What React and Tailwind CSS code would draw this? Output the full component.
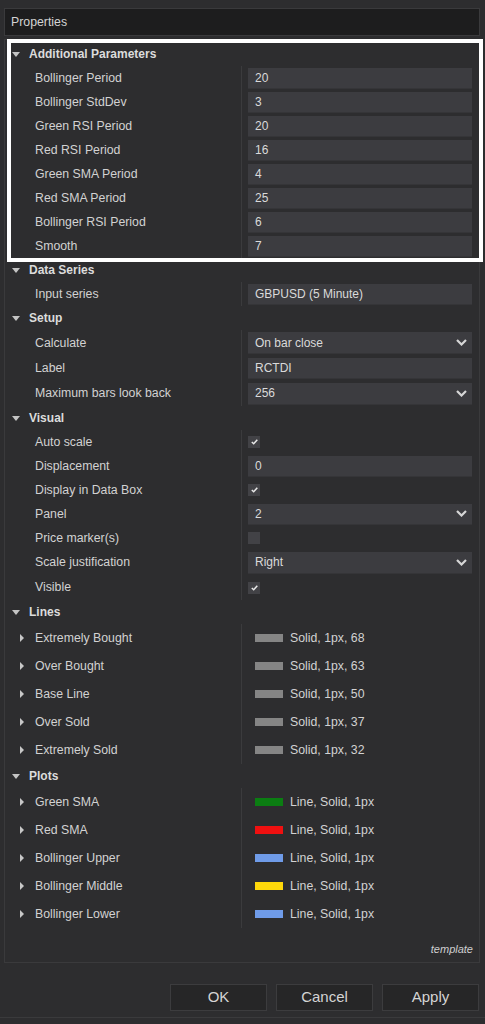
import React from 'react';

const font = { fontFamily: '"Liberation Sans", Arial, sans-serif' };

const sections = [
  {
    title: 'Additional Parameters',
    rows: [
      { label: 'Bollinger Period', type: 'text', value: '20' },
      { label: 'Bollinger StdDev', type: 'text', value: '3' },
      { label: 'Green RSI Period', type: 'text', value: '20' },
      { label: 'Red RSI Period', type: 'text', value: '16' },
      { label: 'Green SMA Period', type: 'text', value: '4' },
      { label: 'Red SMA Period', type: 'text', value: '25' },
      { label: 'Bollinger RSI Period', type: 'text', value: '6' },
      { label: 'Smooth', type: 'text', value: '7' },
    ],
  },
  {
    title: 'Data Series',
    rows: [{ label: 'Input series', type: 'text', value: 'GBPUSD (5 Minute)' }],
  },
  {
    title: 'Setup',
    rows: [
      { label: 'Calculate', type: 'combo', value: 'On bar close', h: 'h-[26px]' },
      { label: 'Label', type: 'text', value: 'RCTDI', h: 'h-[25px]' },
      { label: 'Maximum bars look back', type: 'combo', value: '256', h: 'h-[25px]' },
    ],
  },
  {
    title: 'Visual',
    rows: [
      { label: 'Auto scale', type: 'check', checked: true },
      { label: 'Displacement', type: 'text', value: '0' },
      { label: 'Display in Data Box', type: 'check', checked: true },
      { label: 'Panel', type: 'combo', value: '2' },
      { label: 'Price marker(s)', type: 'check', checked: false },
      { label: 'Scale justification', type: 'combo', value: 'Right', h: 'h-[25px]' },
      { label: 'Visible', type: 'check', checked: true, h: 'h-[25px]' },
    ],
  },
  {
    title: 'Lines',
    rows: [
      { label: 'Extremely Bought', type: 'swatch', color: '#858585', value: 'Solid, 1px, 68' },
      { label: 'Over Bought', type: 'swatch', color: '#858585', value: 'Solid, 1px, 63' },
      { label: 'Base Line', type: 'swatch', color: '#858585', value: 'Solid, 1px, 50' },
      { label: 'Over Sold', type: 'swatch', color: '#858585', value: 'Solid, 1px, 37' },
      { label: 'Extremely Sold', type: 'swatch', color: '#858585', value: 'Solid, 1px, 32' },
    ],
  },
  {
    title: 'Plots',
    rows: [
      { label: 'Green SMA', type: 'swatch', color: '#0b7d12', value: 'Line, Solid, 1px' },
      { label: 'Red SMA', type: 'swatch', color: '#f01010', value: 'Line, Solid, 1px' },
      { label: 'Bollinger Upper', type: 'swatch', color: '#6f9be8', value: 'Line, Solid, 1px' },
      { label: 'Bollinger Middle', type: 'swatch', color: '#ffd80a', value: 'Line, Solid, 1px' },
      { label: 'Bollinger Lower', type: 'swatch', color: '#6f9be8', value: 'Line, Solid, 1px' },
    ],
  },
];

const DownTri = () => (
  <svg width="8" height="5" viewBox="0 0 8 5" className="shrink-0">
    <path d="M0 0 L8 0 L4 5 Z" fill="#c4c4c4" />
  </svg>
);

const RightTri = () => (
  <svg width="4" height="8" viewBox="0 0 4 8" className="shrink-0">
    <path d="M0 0 L4 4 L0 8 Z" fill="#c8c8c8" />
  </svg>
);

const Chevron = () => (
  <svg width="11" height="7" viewBox="0 0 11 7" className="shrink-0">
    <path d="M1 1 L5.5 5.5 L10 1" fill="none" stroke="#d6d6d6" strokeWidth="2.2" />
  </svg>
);

const Check = () => (
  <svg width="7" height="6" viewBox="0 0 7 6">
    <path d="M0.8 3 L2.7 4.8 L6.3 0.8" fill="none" stroke="#e8e8e8" strokeWidth="1.5" />
  </svg>
);

const Value = ({ row }) => {
  if (row.type === 'check') {
    return (
      <div className="w-[12px] h-[12px] bg-[#424246] flex items-center justify-center">
        {row.checked && <Check />}
      </div>
    );
  }
  if (row.type === 'swatch') {
    return (
      <div className="flex items-center pl-[7px]">
        <div className="w-[28px] h-[8px]" style={{ backgroundColor: row.color }}></div>
        <span className="ml-[7px] text-[12.3px] text-[#d2d2d2]">{row.value}</span>
      </div>
    );
  }
  return (
    <div className={`w-[224px] ${row.type === 'combo' && row.h ? 'h-[22px]' : 'h-[21px]'} bg-[#3c3c40] border-b border-[#353538] flex items-center justify-between pl-[7px] pr-[5px]`}>
      <span className="text-[12px] text-[#dadada]">{row.value}</span>
      {row.type === 'combo' && <Chevron />}
    </div>
  );
};

const Row = ({ row }) => {
  const expandable = row.type === 'swatch';
  const h = expandable ? 'h-[28px]' : row.h || 'h-[24px]';
  return (
    <div className={`flex ${h}`}>
      <div className={`w-[236px] flex items-center ${expandable ? 'pl-[15px]' : 'pl-[30px]'}`}>
        {expandable && <RightTri />}
        <span className={`${expandable ? 'ml-[11px]' : ''} text-[12.3px] text-[#d2d2d2] whitespace-nowrap`}>{row.label}</span>
      </div>
      <div className="flex-1 border-l border-[#3b3b3d] pl-[6px] flex items-center">
        <Value row={row} />
      </div>
    </div>
  );
};

export default function App() {
  return (
    <div className="relative w-[485px] h-[1024px] bg-[#2d2d2f] overflow-hidden" style={font}>
      <div className="h-[8px]"></div>
      {/* title bar */}
      <div className="ml-[4px] w-[476px] h-[28px] bg-[#1d1d1e] border border-[#3a3a3c] flex items-center pl-[6px]">
        <span className="text-[12.3px] text-[#d4d4d4]">Properties</span>
      </div>

      {/* property grid */}
      <div className="ml-[4px] mt-[3px] w-[476px] border border-[#3a3a3c] pt-[2px]">
        {sections.map((s) => (
          <div key={s.title}>
            <div className="h-[24px] flex items-center pl-[7px]">
              <DownTri />
              <span className="ml-[9px] text-[12px] font-bold text-[#dcdcdc]">{s.title}</span>
            </div>
            {s.rows.map((r) => (
              <Row key={r.label} row={r} />
            ))}
          </div>
        ))}
        <div className="h-[34px] flex items-end justify-end pr-[6px] pb-[5px]">
          <span className="text-[11px] italic text-[#cfcfcf]">template</span>
        </div>
      </div>

      {/* buttons */}
      <div className="mt-[21px] flex justify-end gap-[9px] pr-[6px]">
        {['OK', 'Cancel', 'Apply'].map((b) => (
          <div key={b} className="w-[97px] h-[27px] bg-[#262627] border border-[#3c3c3e] flex items-center justify-center text-[15px] text-[#d4d4d4]">
            {b}
          </div>
        ))}
      </div>
      <div className="mt-[6px] border-t border-[#3a3a3c]"></div>

      {/* highlight annotation */}
      <div className="absolute left-[7px] top-[39px] w-[476px] h-[223px] border-[4px] border-white pointer-events-none"></div>
    </div>
  );
}
